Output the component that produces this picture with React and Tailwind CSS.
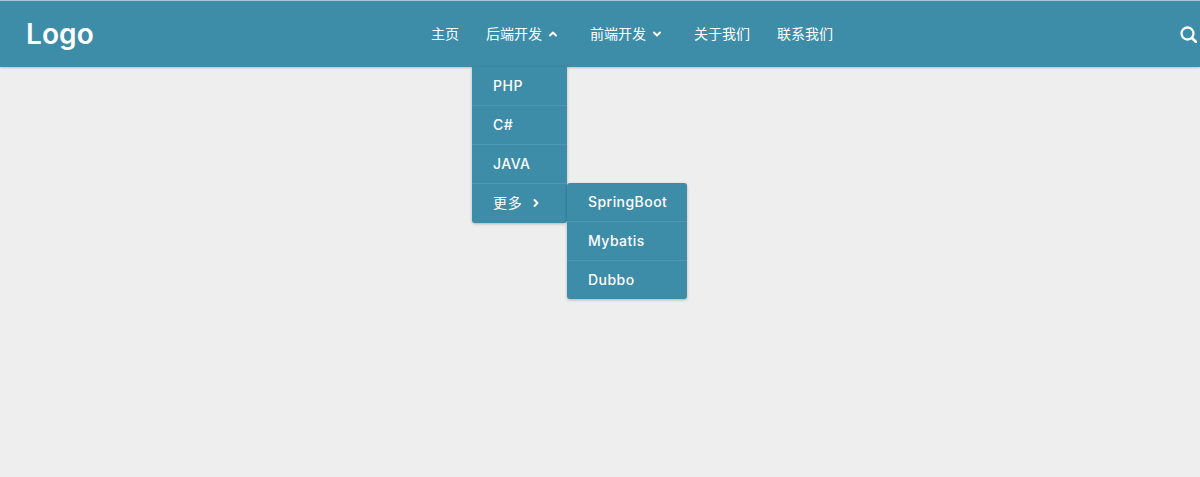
import React from "react";
import { ChevronUp, ChevronDown, ChevronRight } from "lucide-react";

const font = "font-['Inter','Noto_Sans_CJK_SC',sans-serif]";

function MainItem({ children }) {
  return (
    <li className="h-[39px] pl-[21px] pb-px flex items-center text-[14px] font-medium tracking-[0.5px] text-[#fdfeff] border-b border-[#4f98b1]">
      {children}
    </li>
  );
}

function SubItem({ children, last }) {
  return (
    <li className={`pl-[21px] pb-px flex items-center text-[14px] font-medium tracking-[0.45px] text-[#fdfeff] ${last ? "h-[38px]" : "h-[39px] border-b border-[#4f98b1]"}`}>
      {children}
    </li>
  );
}

export default function App() {
  return (
    <div className={`h-[477px] bg-[#eeeeee] ${font}`}>
      <div className="h-px bg-[#a9cbd7]" />
      <nav className="relative z-10 h-[66px] bg-[#3d8ca8] shadow-[0_1px_2px_rgba(0,0,0,0.2)] flex items-center pl-[26px] pr-[3px] pb-[1px] text-white">
        <div className="w-[68px] text-[28px] leading-none font-semibold tracking-[0.1px]">Logo</div>
        <ul className="ml-[323px] h-full flex items-center text-[14px] font-['Noto_Sans_CJK_SC',sans-serif]">
          <li className="px-[14px]">主页</li>
          <li className="relative w-[104px] pl-[13px] flex items-center h-full">
            <span>后端开发</span>
            <ChevronUp className="ml-[5px] w-[12px] h-[12px]" strokeWidth={4} />
            <ul className={`absolute left-[-1px] top-[66px] w-[95px] bg-[#3d8ca8] rounded-b-[3px] shadow-[0_1px_3px_rgba(0,0,0,0.25)] ${font}`}>
              <MainItem>PHP</MainItem>
              <MainItem>C#</MainItem>
              <MainItem>JAVA</MainItem>
              <li className="relative h-[39px] pl-[21px] pb-[2px] flex items-center text-[14px] font-['Noto_Sans_CJK_SC',sans-serif] tracking-[0.75px] text-[#fdfeff]">
                <span>更多</span>
                <ChevronRight className="ml-[7px] w-[12px] h-[12px]" strokeWidth={4} />
                <ul className={`absolute left-full top-[-1px] w-[120px] bg-[#3d8ca8] rounded-[3px] shadow-[0_1px_3px_rgba(0,0,0,0.25)] ${font}`}>
                  <SubItem>SpringBoot</SubItem>
                  <SubItem>Mybatis</SubItem>
                  <SubItem last>Dubbo</SubItem>
                </ul>
              </li>
            </ul>
          </li>
          <li className="w-[104px] pl-[13px] flex items-center">
            <span>前端开发</span>
            <ChevronDown className="ml-[5px] w-[12px] h-[12px]" strokeWidth={4} />
          </li>
          <li className="pl-[13px] pr-[14px]">关于我们</li>
          <li className="pl-[13px] pr-[14px]">联系我们</li>
        </ul>
        <svg viewBox="0 0 18 18" className="ml-auto w-[18px] h-[18px]" fill="none" stroke="currentColor">
          <circle cx="8.5" cy="8.5" r="6" strokeWidth="2.3" />
          <path d="M13 13l4 4" strokeWidth="2.8" strokeLinecap="round" />
        </svg>
      </nav>
    </div>
  );
}
